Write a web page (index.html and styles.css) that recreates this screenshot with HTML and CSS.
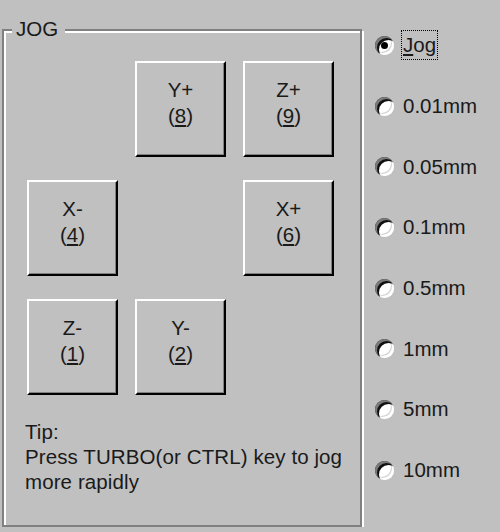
FILE: index.html
```html
<!DOCTYPE html>
<html lang="en">
<head>
    <meta charset="UTF-8">
    <meta name="viewport" content="width=device-width, initial-scale=1.0">
    <title>JOG</title>
    <link rel="stylesheet" href="styles.css">
</head>
<body>
    <div class="window">
        <div class="group">
            <span class="group-title">JOG</span>
            <div class="pad">
                <button type="button" class="jog y-plus"><span>Y+</span><span>(<u>8</u>)</span></button>
                <button type="button" class="jog z-plus"><span>Z+</span><span>(<u>9</u>)</span></button>
                <button type="button" class="jog x-minus"><span>X-</span><span>(<u>4</u>)</span></button>
                <button type="button" class="jog x-plus"><span>X+</span><span>(<u>6</u>)</span></button>
                <button type="button" class="jog z-minus"><span>Z-</span><span>(<u>1</u>)</span></button>
                <button type="button" class="jog y-minus"><span>Y-</span><span>(<u>2</u>)</span></button>
            </div>
            <p class="tip">Tip:<br>Press TURBO(or CTRL) key to jog<br>more rapidly</p>
        </div>
        <div class="steps">
            <label class="step"><span class="radio checked"></span><span class="focus"><u>J</u>og</span></label>
            <label class="step"><span class="radio"></span>0.01mm</label>
            <label class="step"><span class="radio"></span>0.05mm</label>
            <label class="step"><span class="radio"></span>0.1mm</label>
            <label class="step"><span class="radio"></span>0.5mm</label>
            <label class="step"><span class="radio"></span>1mm</label>
            <label class="step"><span class="radio"></span>5mm</label>
            <label class="step"><span class="radio"></span>10mm</label>
        </div>
    </div>
</body>
</html>
```

FILE: styles.css
```css
body {
    margin: 0;
    background: #c0c0c0;
    font-family: "Liberation Sans", Arial, sans-serif;
    font-size: 20.5px;
    color: #1a1a1a;
}
.window {
    display: flex;
    align-items: flex-start;
}
.group {
    position: relative;
    box-sizing: border-box;
    width: 360px;
    height: 498px;
    margin: 29px 0 0 2px;
    border: 2px solid #808080;
    box-shadow: inset 2px 2px 0 #fff, 2px 2px 0 #fff;
}
.group-title {
    position: absolute;
    top: -13px;
    left: 8px;
    padding: 0 7px 0 4px;
    background: #c0c0c0;
    line-height: 22px;
}
.pad {
    display: grid;
    grid-template-columns: repeat(3, 91px);
    grid-template-rows: repeat(3, 96px);
    gap: 23px 17px;
    margin: 30px 0 0 23px;
}
.jog {
    display: flex;
    flex-direction: column;
    justify-content: center;
    align-items: center;
    padding: 0 0 12px;
    font: inherit;
    color: inherit;
    line-height: 26px;
    background: #c0c0c0;
    border: 2px solid;
    border-color: #fff #000 #000 #fff;
    box-shadow: inset -1px -1px 0 #808080;
}
.y-plus { grid-area: 1 / 2; }
.z-plus { grid-area: 1 / 3; }
.x-minus { grid-area: 2 / 1; }
.x-plus { grid-area: 2 / 3; }
.z-minus { grid-area: 3 / 1; }
.y-minus { grid-area: 3 / 2; }
.tip {
    margin: 24px 0 0 21px;
    line-height: 25px;
    letter-spacing: 0.1px;
}
.steps {
    display: flex;
    flex-direction: column;
    margin: 15px 0 0 13px;
}
.step {
    display: flex;
    align-items: center;
    height: 60.7px;
}
.radio {
    position: relative;
    flex: none;
    width: 19px;
    height: 19px;
    margin-right: 9px;
    border-radius: 50%;
    background: #fff;
    box-shadow: inset 2px 2px 0 #7a7a7a, inset 4px 4px 0 #101010, inset -2px -2px 0 #fff, inset -3px -3px 0 #d4d4d4;
}
.radio.checked::after {
    content: "";
    position: absolute;
    left: 6px;
    top: 6px;
    width: 7px;
    height: 7px;
    border-radius: 50%;
    background: #000;
}
.focus {
    margin-left: -2px;
    padding: 3px 1px;
    border: 1px dotted #000;
    line-height: 22px;
}
```
